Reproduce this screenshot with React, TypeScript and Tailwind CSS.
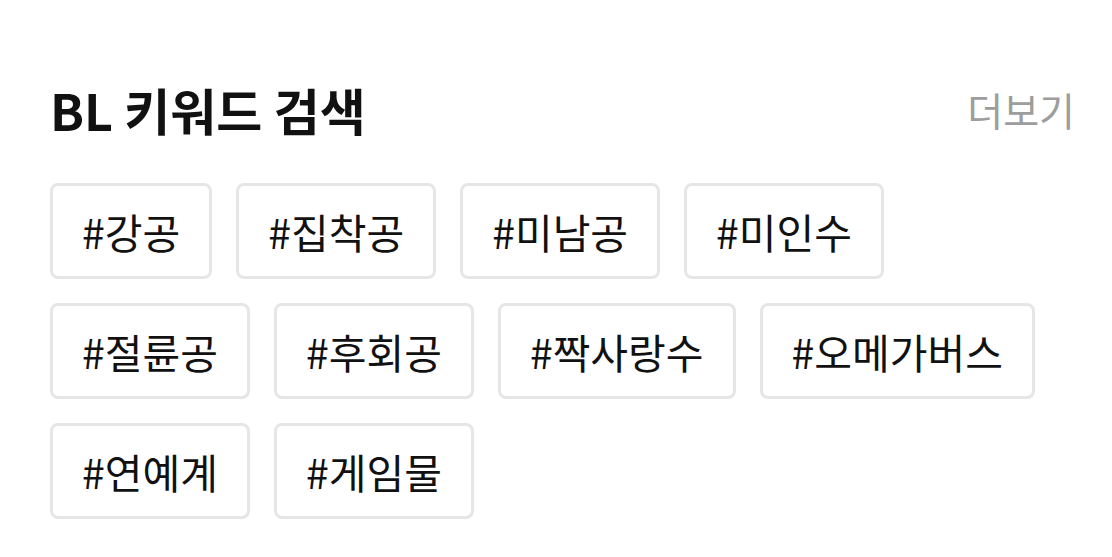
import React from "react";

const keywords = [
  "강공",
  "집착공",
  "미남공",
  "미인수",
  "절륜공",
  "후회공",
  "짝사랑수",
  "오메가버스",
  "연예계",
  "게임물",
];

const App = () => {
  return (
    <div
      className="w-[1112px] h-[557px] bg-white pl-[50px] pr-[37px] pt-[77px]"
      style={{ fontFamily: '"Noto Sans CJK KR", "Noto Sans", sans-serif' }}
    >
      <div className="flex items-center justify-between h-[64px]">
        <h2 className="text-[50px] font-bold text-[#111] leading-none">
          BL 키워드 검색
        </h2>
        <button className="text-[39px] text-[#9d9d9d] leading-none">더보기</button>
      </div>
      <div className="flex flex-wrap gap-[24px] mt-[42px] pr-[40px]">
        {keywords.map((k) => (
          <button
            key={k}
            className="h-[96px] px-[29px] border-[3px] border-[#e6e6e6] rounded-[8px] text-[41px] text-[#111] leading-none"
          >
            #{k}
          </button>
        ))}
      </div>
    </div>
  );
};

export default App;
